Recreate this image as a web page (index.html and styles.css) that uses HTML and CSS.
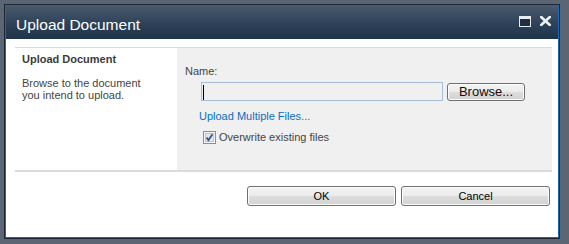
FILE: index.html
```html
<!DOCTYPE html>
<html>
<head>
<meta charset="utf-8">
<link rel="stylesheet" href="styles.css">
</head>
<body>
<div class="dialog">
  <div class="titlebar">
    <span class="title">Upload Document</span>
    <div class="tools">
      <svg class="ico" width="12" height="11" viewBox="0 0 12 11"><rect x="0.5" y="0.5" width="11" height="10" fill="#1e2f44" stroke="#e8ecf0"/><rect x="1" y="1" width="10" height="2" fill="#e8ecf0"/></svg>
      <svg class="ico" width="11" height="10" viewBox="0 0 11 10"><path d="M1.2 1 L9.8 9 M9.8 1 L1.2 9" stroke="#eef1f4" stroke-width="2.6" stroke-linecap="square"/></svg>
    </div>
  </div>
  <div class="body">
    <div class="panel">
      <div class="desc">
        <div class="desc-title">Upload Document</div>
        <div class="desc-text">Browse to the document<br>you intend to upload.</div>
      </div>
      <div class="form">
        <div class="label">Name:</div>
        <div class="file-row">
          <div class="field"><span class="caret"></span></div>
          <button class="btn browse">Browse...</button>
        </div>
        <a class="link" href="#">Upload Multiple Files...</a>
        <label class="check">
          <svg width="13" height="13" viewBox="0 0 13 13"><rect x="0.5" y="0.5" width="12" height="12" fill="#f4f4f4" stroke="#8f8f8f"/><rect x="2.5" y="2.5" width="8" height="8" fill="#e6e6e6" stroke="#c4c4c4"/><path d="M3.6 6.6 L5.4 9.2 L9.4 3.2" fill="none" stroke="#2c4f93" stroke-width="1.7"/></svg>
          <span>Overwrite existing files</span>
        </label>
      </div>
    </div>
    <div class="footer">
      <button class="btn wide">OK</button>
      <button class="btn wide">Cancel</button>
    </div>
  </div>
</div>
</body>
</html>
```
FILE: styles.css
```css
html, body {
  margin: 0;
  padding: 0;
}
body {
  width: 569px;
  height: 244px;
  background: #5b6574;
  overflow: hidden;
  font-family: "Liberation Sans", Arial, sans-serif;
}
.dialog {
  margin: 5px 0 0 5px;
  width: 552px;
  height: 231px;
  border: 1px solid #0a6fc2;
  box-shadow: 0 0 0 1px #1a2636;
  display: flex;
  flex-direction: column;
  background: #fff;
}
.titlebar {
  height: 33px;
  background: linear-gradient(#4a596c, #2b3f56 60%, #1f3349);
  display: flex;
  align-items: flex-start;
  justify-content: space-between;
}
.title {
  color: #fff;
  font-size: 15.5px;
  line-height: 18px;
  padding: 10px 0 0 10px;
}
.tools {
  display: flex;
  gap: 9px;
  padding: 10px 7px 0 0;
}
.body {
  flex: 1;
  display: flex;
  flex-direction: column;
  padding: 8px 6px 0 9px;
}
.panel {
  display: flex;
  height: 122px;
  border-top: 1px solid #dadada;
  border-bottom: 2px solid #dadada;
}
.desc {
  width: 162px;
  padding: 4px 0 0 7px;
  box-sizing: border-box;
  color: #444;
}
.desc-title {
  font-weight: bold;
  font-size: 11px;
  line-height: 14px;
  color: #3b3b3b;
}
.desc-text {
  margin-top: 11px;
  font-size: 11px;
  line-height: 12px;
  color: #444;
}
.form {
  flex: 1;
  background: #f0f0f0;
  padding: 16px 0 0 8px;
  display: flex;
  flex-direction: column;
  align-items: flex-start;
}
.label {
  font-size: 11px;
  line-height: 14px;
  color: #444;
}
.file-row {
  display: flex;
  align-items: flex-start;
  gap: 4px;
  margin: 4px 0 0 16px;
}
.field {
  width: 240px;
  height: 17px;
  border: 1px solid #a6bdd6;
  background: #f0f0f0;
  position: relative;
}
.caret {
  position: absolute;
  left: 1px;
  top: 2px;
  width: 1px;
  height: 15px;
  background: #000;
}
.btn {
  font-family: "Liberation Sans", Arial, sans-serif;
  border: 1px solid #707070;
  border-radius: 3px;
  background: linear-gradient(#f3f3f3 0%, #ececec 48%, #dddddd 52%, #d2d2d2 100%);
  box-shadow: inset 0 0 0 1px #fcfcfc;
  padding: 0;
  color: #000;
}
.browse {
  margin-top: 1px;
  width: 78px;
  height: 18px;
  font-size: 13px;
  line-height: 16px;
  color: #1a0a0a;
}
.link {
  margin: 8px 0 0 14px;
  font-size: 11px;
  line-height: 14px;
  color: #0a6ec4;
  text-decoration: none;
}
.check {
  margin: 7px 0 0 18px;
  display: flex;
  align-items: center;
  gap: 3px;
  font-size: 11px;
  line-height: 14px;
  color: #444;
}
.check svg {
  display: block;
}
.footer {
  display: flex;
  justify-content: flex-end;
  gap: 5px;
  padding: 14px 2px 0 0;
}
.wide {
  width: 149px;
  height: 20px;
  font-size: 11px;
  line-height: 18px;
}
```
